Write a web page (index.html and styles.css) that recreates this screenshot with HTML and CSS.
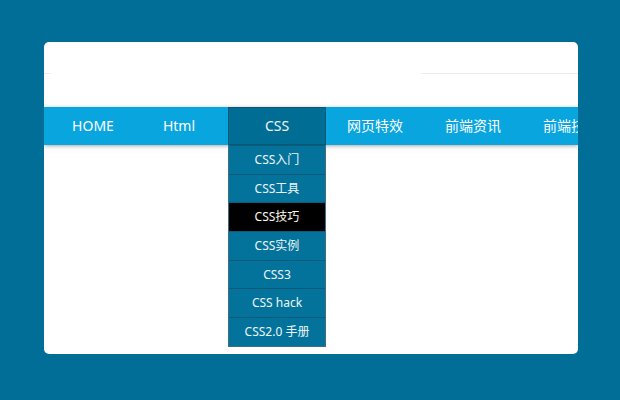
FILE: index.html
```html
<!DOCTYPE html>
<html>
<head>
<meta charset="utf-8">
<link rel="stylesheet" href="styles.css">
</head>
<body>
<div class="card">
  <div class="header">
    <div class="rule rule-left"></div>
    <div class="rule-gap"></div>
    <div class="rule rule-right"></div>
  </div>
  <nav class="nav">
    <ul class="menu">
      <li class="item first">HOME</li>
      <li class="item">Html</li>
      <li class="item active">CSS
        <ul class="drop">
          <li>CSS入门</li>
          <li>CSS工具</li>
          <li class="hover">CSS技巧</li>
          <li>CSS实例</li>
          <li>CSS3</li>
          <li>CSS hack</li>
          <li>CSS2.0 手册</li>
        </ul>
      </li>
      <li class="item">网页特效</li>
      <li class="item">前端资讯</li>
      <li class="item">前端技术</li>
    </ul>
  </nav>
</div>
</body>
</html>
```

FILE: styles.css
```css
html, body {
  margin: 0;
  padding: 0;
}
body {
  width: 620px;
  height: 400px;
  background: #006e96;
  font-family: "Noto Sans", "Noto Sans CJK SC", sans-serif;
  padding-top: 42px;
  box-sizing: border-box;
}
.card {
  margin-left: 44px;
  width: 534px;
  height: 312px;
  background: #fff;
  border-radius: 5px;
  overflow: hidden;
}
.header {
  height: 65px;
  display: flex;
  align-items: flex-start;
  padding-top: 31px;
  box-sizing: border-box;
}
.rule {
  height: 1px;
  background: #ececec;
}
.rule-left { width: 7px; }
.rule-gap { width: 370px; }
.rule-right { flex: 1; }
.nav {
  height: 38px;
  background: #09a5de;
  box-shadow: 0 1px 4px rgba(0, 0, 0, 0.35);
  position: relative;
  z-index: 1;
}
.menu {
  list-style: none;
  margin: 0;
  padding: 0;
  display: flex;
  height: 38px;
  white-space: nowrap;
}
.item {
  flex: 0 0 98px;
  width: 98px;
  box-sizing: border-box;
  text-align: center;
  color: #fff;
  font-size: 14px;
  line-height: 38px;
  position: relative;
}
.item.first {
  flex-basis: 86px;
  width: 86px;
  padding-left: 12px;
}
.item.active {
  background: #006d94;
  border: 1px solid #0a5675;
  line-height: 36px;
  color: #f0f6f8;
}
.drop {
  position: absolute;
  left: -1px;
  top: 37px;
  width: 98px;
  margin: 0;
  padding: 0;
  list-style: none;
  background: #03739b;
  border: 1px solid #3d6f86;
  border-top: none;
  box-sizing: border-box;
}
.drop li {
  height: 28.7px;
  line-height: 28px;
  border-top: 1px solid #0b5a7a;
  box-sizing: border-box;
  font-size: 12px;
  color: #eef6f9;
  text-align: center;
}
.drop li.hover {
  background: #000;
  color: #fff8e8;
}
```
